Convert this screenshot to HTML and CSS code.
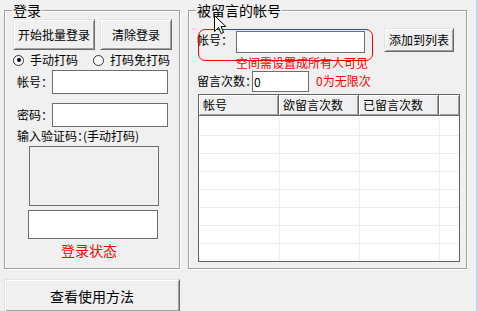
FILE: index.html
```html
<!DOCTYPE html>
<html lang="zh-CN">
<head>
<meta charset="utf-8">
<title>批量留言</title>
<link rel="stylesheet" href="styles.css">
</head>
<body>
<div class="app">
  <div class="left-col">
    <div class="group group-login">
      <span class="group-title">登录</span>
      <div class="btn-row">
        <button class="btn btn-start">开始批量登录</button>
        <button class="btn btn-clear">清除登录</button>
      </div>
      <div class="radio-row">
        <span class="radio checked"></span><span class="radio-text">手动打码</span>
        <span class="radio radio-second"></span><span class="radio-text">打码免打码</span>
      </div>
      <div class="field field-account">
        <span class="field-label">帐号：</span><span class="input input-login"></span>
      </div>
      <div class="field field-password">
        <span class="field-label">密码：</span><span class="input input-login"></span>
      </div>
      <div class="captcha-label">输入验证码：(手动打码)</div>
      <div class="captcha-img"></div>
      <div class="input captcha-input"></div>
      <div class="status">登录状态</div>
    </div>
    <button class="btn btn-help">查看使用方法</button>
  </div>

  <div class="group group-target">
    <span class="group-title">被留言的帐号</span>
    <div class="target-row">
      <span class="field-label target-label">帐号：</span>
      <span class="input input-target"></span>
      <button class="btn btn-add">添加到列表</button>
    </div>
    <div class="hint">空间需设置成所有人可见</div>
    <div class="count-row">
      <span class="field-label count-label">留言次数：</span>
      <span class="input input-count">0</span>
      <span class="count-hint">0为无限次</span>
    </div>
    <div class="table">
      <div class="thead">
        <div class="th">帐号</div>
        <div class="th">欲留言次数</div>
        <div class="th">已留言次数</div>
        <div class="th th-fill"></div>
      </div>
      <div class="tbody">
        <div class="tr"><div class="td"></div><div class="td"></div><div class="td"></div><div class="td td-fill"></div></div>
        <div class="tr"><div class="td"></div><div class="td"></div><div class="td"></div><div class="td td-fill"></div></div>
        <div class="tr"><div class="td"></div><div class="td"></div><div class="td"></div><div class="td td-fill"></div></div>
        <div class="tr"><div class="td"></div><div class="td"></div><div class="td"></div><div class="td td-fill"></div></div>
        <div class="tr"><div class="td"></div><div class="td"></div><div class="td"></div><div class="td td-fill"></div></div>
        <div class="tr"><div class="td"></div><div class="td"></div><div class="td"></div><div class="td td-fill"></div></div>
        <div class="tr"><div class="td"></div><div class="td"></div><div class="td"></div><div class="td td-fill"></div></div>
        <div class="tr"><div class="td"></div><div class="td"></div><div class="td"></div><div class="td td-fill"></div></div>
      </div>
    </div>
    <div class="annotation"></div>
    <svg class="cursor" width="13" height="20" viewBox="0 0 13 20" aria-hidden="true">
      <path d="M0.5 0.5 L0.5 16.5 L4.5 12.5 L7.2 18.5 L9.6 17.5 L7 11.5 L11.8 11.5 Z" fill="#fff" stroke="#000" stroke-width="1" stroke-linejoin="miter"/>
    </svg>
  </div>
</div>
</body>
</html>
```

FILE: styles.css
```css
html {
  background: #f0f0f0;
}
body {
  margin: 0;
  min-height: 311px;
  background: #f0f0f0;
  box-shadow: inset -1px 0 0 #b9d3ef;
  font-family: "Noto Sans CJK SC", "Noto Sans", "Liberation Sans", sans-serif;
  font-size: 12px;
  color: #000;
  overflow: hidden;
}
.app {
  display: flex;
  align-items: flex-start;
  padding: 10px 0 0 4px;
}
.left-col {
  display: flex;
  flex-direction: column;
  width: 176px;
}

/* group boxes */
.group {
  position: relative;
  box-sizing: border-box;
  border: 1px solid #a0a0a0;
  box-shadow: inset 1px 1px 0 #fff, 1px 1px 0 #fff;
}
.group-title {
  position: absolute;
  top: -9px;
  left: 7px;
  padding: 0 1px;
  background: #f0f0f0;
  font-size: 14px;
  line-height: 16px;
  color: #000;
}
.group-login {
  width: 176px;
  height: 259px;
  padding: 8px 0 0 8px;
}
.group-target {
  width: 279px;
  height: 259px;
  margin-left: 8px;
  padding: 17px 0 0 8px;
}

/* buttons */
.btn {
  box-sizing: border-box;
  font-family: inherit;
  font-size: 12px;
  line-height: 14px;
  color: #000;
  background: #f0f0f0;
  border: 1px solid;
  border-color: #e3e3e3 #696969 #696969 #e3e3e3;
  box-shadow: inset 1px 1px 0 #fff, inset -1px -1px 0 #a0a0a0;
  padding: 0;
  margin: 0;
  flex-shrink: 0;
}
.btn-row {
  display: flex;
  gap: 5px;
}
.btn-start {
  width: 82px;
  height: 31px;
}
.btn-clear {
  width: 72px;
  height: 31px;
}
.btn-help {
  width: 176px;
  height: 33px;
  margin-top: 10px;
  font-size: 14px;
}
.btn-add {
  width: 70px;
  height: 24px;
  margin-left: 19px;
}

/* radio */
.radio-row {
  display: flex;
  align-items: center;
  height: 16px;
  margin-top: 2px;
  line-height: 16px;
}
.radio {
  box-sizing: border-box;
  width: 11px;
  height: 11px;
  border: 1px solid #333;
  border-radius: 50%;
  background: #fff;
  display: flex;
  align-items: center;
  justify-content: center;
  flex-shrink: 0;
}
.radio.checked::after {
  content: "";
  width: 4px;
  height: 4px;
  border-radius: 50%;
  background: #000;
}
.radio-text {
  margin-left: 6px;
  white-space: nowrap;
}
.radio-second {
  margin-left: 15px;
}

/* fields */
.field {
  display: flex;
  align-items: center;
  padding-left: 4px;
}
.field-account {
  margin-top: 2px;
}
.field-password {
  margin-top: 9px;
}
.field-label {
  line-height: 14px;
  white-space: nowrap;
  flex-shrink: 0;
  font-feature-settings: "halt";
}
.field .field-label {
  width: 35px;
}
.input {
  box-sizing: border-box;
  display: block;
  background: #fff;
  border: 1px solid #6d6d6d;
  line-height: 16px;
  padding: 0 2px;
  flex-shrink: 0;
}
.input-login {
  width: 116px;
  height: 24px;
}
.captcha-label {
  margin-top: 2px;
  padding-left: 4px;
  line-height: 14px;
  white-space: nowrap;
  font-feature-settings: "halt";
}
.captcha-img {
  box-sizing: border-box;
  width: 130px;
  height: 60px;
  margin: 3px 0 0 16px;
  border: 1px solid #6d6d6d;
}
.captcha-input {
  width: 130px;
  height: 29px;
  margin: 4px 0 0 15px;
}
.status {
  margin: 4px 0 0 48px;
  font-size: 14px;
  line-height: 14px;
  color: #ff0000;
}

/* target group */
.target-row {
  display: flex;
  align-items: center;
  height: 24px;
}
.target-label {
  width: 39px;
}
.input-target {
  width: 129px;
  height: 22px;
  margin-top: 3px;
}
.hint {
  margin: 4px 0 0 39px;
  line-height: 14px;
  color: #ff0000;
  white-space: nowrap;
}
.count-row {
  display: flex;
  align-items: center;
  height: 22px;
  margin-top: 0;
}
.count-label {
  width: 55px;
}
.input-count {
  width: 57px;
  height: 21px;
  margin-top: 1px;
  padding: 1px 1px 0;
  line-height: 18px;
}
.count-hint {
  margin-left: 7px;
  color: #ff0000;
  line-height: 14px;
  white-space: nowrap;
}

/* table */
.table {
  box-sizing: border-box;
  width: 262px;
  height: 168px;
  margin: 2px 0 0 1px;
  border: 1px solid #646464;
  background: #fff;
  overflow: hidden;
}
.thead {
  display: grid;
  grid-template-columns: 80px 80px 80px 1fr;
  height: 21px;
  margin-bottom: 2px;
}
.th {
  box-sizing: border-box;
  background: #f0f0f0;
  border-right: 1px solid #696969;
  border-bottom: 1px solid #696969;
  box-shadow: inset 1px 1px 0 #fff, inset -1px -1px 0 #a0a0a0;
  padding-left: 4px;
  line-height: 20px;
  white-space: nowrap;
}
.th-fill {
  border-right: none;
}
.tr {
  display: grid;
  grid-template-columns: 81px 80px 80px 1fr;
  height: 18px;
}
.td {
  box-sizing: border-box;
  border-right: 1px solid #ededed;
  border-bottom: 1px solid #ededed;
}
.td-fill {
  border-right: none;
}

/* overlays */
.annotation {
  position: absolute;
  left: 9px;
  top: 18px;
  width: 175px;
  height: 32px;
  box-sizing: border-box;
  border: 1px solid #ff0000;
  border-radius: 7px;
  pointer-events: none;
}
.cursor {
  position: absolute;
  left: 25px;
  top: 4px;
}
```
